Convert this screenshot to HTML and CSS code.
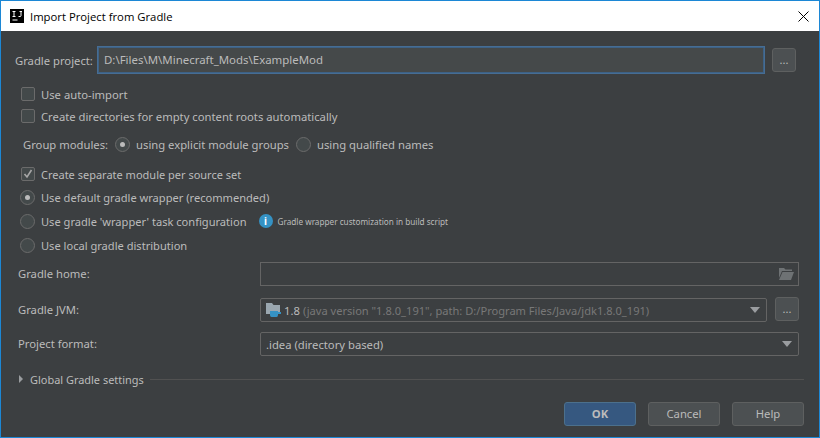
FILE: index.html
```html
<!DOCTYPE html>
<html lang="en">
<head>
  <meta charset="UTF-8" />
  <title>Import Project from Gradle</title>
  <link rel="stylesheet" href="styles.css">
</head>
<body>
  <div class="dialog">
    <!-- title bar -->
    <div class="titlebar">
      <svg class="app-icon" width="14" height="14" viewBox="0 0 14 14">
        <rect width="14" height="14" fill="#000"/>
        <path d="M2.500 2.500h3M4 2.500v5M2.500 7.500h3M9.500 2.500h2.500M11 2.500v4.200q0 .8-1 .8H8.500M2.500 11h5" stroke="#fff" fill="none"/>
      </svg>
      <span class="title">Import Project from Gradle</span>
      <svg class="close" width="11" height="11" viewBox="0 0 11 11">
        <path d="M.5.5l10 10M10.500.5l-10 10" stroke="#000" fill="none"/>
      </svg>
    </div>

    <div class="content">
      <div class="project-row">
        <span class="project-label">Gradle project:</span>
        <div class="project-input">D:\Files\M\Minecraft_Mods\ExampleMod</div>
        <div class="dots-btn">...</div>
      </div>

      <div class="opt first"><span class="check"></span>Use auto-import</div>
      <div class="opt"><span class="check"></span>Create directories for empty content roots automatically</div>

      <div class="group-row">
        <span class="group-label">Group modules:</span>
        <span class="radio on"></span><span class="group-text">using explicit module groups</span>
        <span class="radio"></span><span>using qualified names</span>
      </div>

      <div class="opt separate">
        <span class="check">
          <svg width="12" height="12" viewBox="0 0 12 12"><path d="M2.500 6l2.500 3 4.500-7" stroke="#a7a7a7" stroke-width="1.600" fill="none"/></svg>
        </span>Create separate module per source set
      </div>
      <div class="opt radio-opt"><span class="radio on"></span>Use default gradle wrapper (recommended)</div>
      <div class="opt radio-opt">
        <span class="radio"></span>Use gradle 'wrapper' task configuration
        <span class="info">i</span><span class="hint">Gradle wrapper customization in build script</span>
      </div>
      <div class="opt radio-opt"><span class="radio"></span>Use local gradle distribution</div>

      <div class="form">
        <span class="form-label">Gradle home:</span>
        <div class="field home">
          <svg width="15" height="12" viewBox="0 0 15 12"><path d="M0 0h5l1.500 1.500H13V3H3L0 10zM3.500 4H15l-3 8H0z" fill="#6e7274"/></svg>
        </div>

        <span class="form-label">Gradle JVM:</span>
        <div class="jvm-row">
          <div class="field select">
            <svg class="jdk-icon" width="15" height="14" viewBox="0 0 15 14">
              <path d="M0 0h6l1.500 2H14v9H0z" fill="#9aa7b0"/>
              <path d="M4 8h8v4q0 2-1.500 2h-5Q4 14 4 12zM12 9h3v2h-3z" fill="#3592c4"/>
            </svg>
            <span class="jvm-version">1.8</span>
            <span class="muted">(java version "1.8.0_191", path: D:/Program Files/Java/jdk1.8.0_191)</span>
            <span class="arrow"></span>
          </div>
          <div class="dots-btn small">...</div>
        </div>

        <span class="form-label">Project format:</span>
        <div class="field select">
          <span>.idea (directory based)</span>
          <span class="arrow"></span>
        </div>
      </div>

      <div class="global-row">
        <span class="triangle"></span>
        <span class="global-text">Global Gradle settings</span>
        <span class="rule"></span>
      </div>

      <div class="buttons">
        <div class="btn primary">OK</div>
        <div class="btn">Cancel</div>
        <div class="btn">Help</div>
      </div>
    </div>
  </div>
</body>
</html>
```

FILE: styles.css
```css
* { box-sizing: border-box; margin: 0; padding: 0; }
body {
  width: 820px;
  height: 438px;
  overflow: hidden;
  font-family: 'Noto Sans', 'Open Sans', sans-serif;
  font-size: 11.25px;
  color: #bbbbbb;
  background: #3c3f41;
  white-space: nowrap;
}
.dialog {
  width: 820px;
  height: 438px;
  border: 1px solid #1c87d5;
  display: flex;
  flex-direction: column;
}

/* title bar */
.titlebar {
  height: 30px;
  flex: none;
  background: #fff;
  display: flex;
  align-items: center;
  padding: 0 10px 0 9px;
  color: #000;
}
.app-icon { flex: none; }
.title {
  margin-left: 6px;
  font-family: 'Open Sans', sans-serif;
  font-size: 11.3px;
  flex: 1;
}

.content {
  flex: 1;
  display: flex;
  flex-direction: column;
  padding: 15px 15px 0 14px;
}

/* top path row */
.project-row {
  display: flex;
  align-items: center;
  height: 28px;
}
.project-label { width: 82px; flex: none; }
.project-input {
  width: 668px;
  height: 28px;
  border: 2px solid #3d6185;
  outline: 1px solid #466d94;
  outline-offset: -1px;
  background: #45494a;
  padding-left: 5px;
  line-height: 23px;
  font-size: 11.45px;
  flex: none;
}
.dots-btn {
  width: 24px;
  height: 24px;
  margin-left: 7px;
  flex: none;
  border: 1px solid #5e6060;
  border-radius: 3px;
  background: #4c5052;
  text-align: center;
  line-height: 22px;
  font-size: 11px;
}
.dots-btn.small {
  width: 24px;
  margin-left: 8px;
  margin-top: -1px;
}

/* checkbox and radio rows */
.opt {
  display: flex;
  align-items: center;
  height: 22px;
  padding-left: 6px;
}
.opt.first { margin-top: 9px; }
.opt.separate {
  margin-top: 7px;
  font-size: 11px;
}
.opt.radio-opt {
  height: 24px;
  padding-left: 5px;
  font-size: 11.1px;
}
.check {
  width: 14px;
  height: 14px;
  margin-right: 6px;
  border: 1px solid #6b6b6b;
  border-radius: 2px;
  background: #43494a;
  display: flex;
  align-items: center;
  justify-content: center;
  flex: none;
}
.radio {
  width: 15px;
  height: 15px;
  margin-right: 6px;
  border: 1px solid #6b6b6b;
  border-radius: 50%;
  background: #43494a;
  flex: none;
  display: flex;
  align-items: center;
  justify-content: center;
}
.radio.on::after {
  content: '';
  width: 5px;
  height: 5px;
  border-radius: 50%;
  background: #bbbbbb;
}

.group-row {
  display: flex;
  align-items: center;
  height: 24px;
  margin-top: 5px;
  padding-left: 8px;
}
.group-label { margin-right: 7px; }
.group-text { margin-right: 7px; }

.info {
  width: 14px;
  height: 14px;
  margin-left: 12px;
  border-radius: 50%;
  background: #3592c4;
  color: #fff;
  font-size: 10px;
  font-weight: 700;
  line-height: 14px;
  text-align: center;
  flex: none;
}
.hint {
  margin-left: 5px;
  font-size: 8.2px;
}

/* labelled fields */
.form {
  display: grid;
  grid-template-columns: 242px 539px;
  grid-template-rows: 24px 26px 24px;
  row-gap: 10px;
  margin-top: 5px;
  padding-left: 3px;
  align-items: end;
}
.form-label { line-height: 24px; }
.field {
  height: 24px;
  border: 1px solid #646464;
  display: flex;
  align-items: center;
  padding: 0 5px;
}
.field.home {
  justify-content: flex-end;
  padding-right: 4px;
}
.field.select {
  border-radius: 2px;
  flex: 1;
}
.jvm-row {
  display: flex;
  align-items: flex-start;
}
.jdk-icon { margin-right: 3px; flex: none; }
.jvm-version { margin-right: 3px; }
.muted {
  color: #787878;
  font-size: 11.1px;
}
.arrow {
  margin-left: auto;
  margin-right: 1px;
  width: 0;
  height: 0;
  border-left: 5px solid transparent;
  border-right: 5px solid transparent;
  border-top: 6px solid #9a9da0;
}

/* collapsed section */
.global-row {
  display: flex;
  align-items: center;
  height: 16px;
  margin-top: 15px;
  padding-left: 4px;
}
.triangle {
  width: 0;
  height: 0;
  border-top: 4px solid transparent;
  border-bottom: 4px solid transparent;
  border-left: 4px solid #9a9da0;
  margin-right: 7px;
}
.global-text {
  margin-right: 6px;
  font-size: 10.95px;
}
.rule {
  flex: 1;
  height: 1px;
  background: #515151;
}

/* footer buttons */
.buttons {
  display: flex;
  justify-content: flex-end;
  gap: 12px;
  margin-top: 15px;
}
.btn {
  width: 72px;
  height: 24px;
  border: 1px solid #5e6060;
  border-radius: 3px;
  background: #4c5052;
  text-align: center;
  line-height: 22px;
}
.btn.primary {
  background: #365880;
  border-color: #4c708c;
  font-weight: 700;
}
```
